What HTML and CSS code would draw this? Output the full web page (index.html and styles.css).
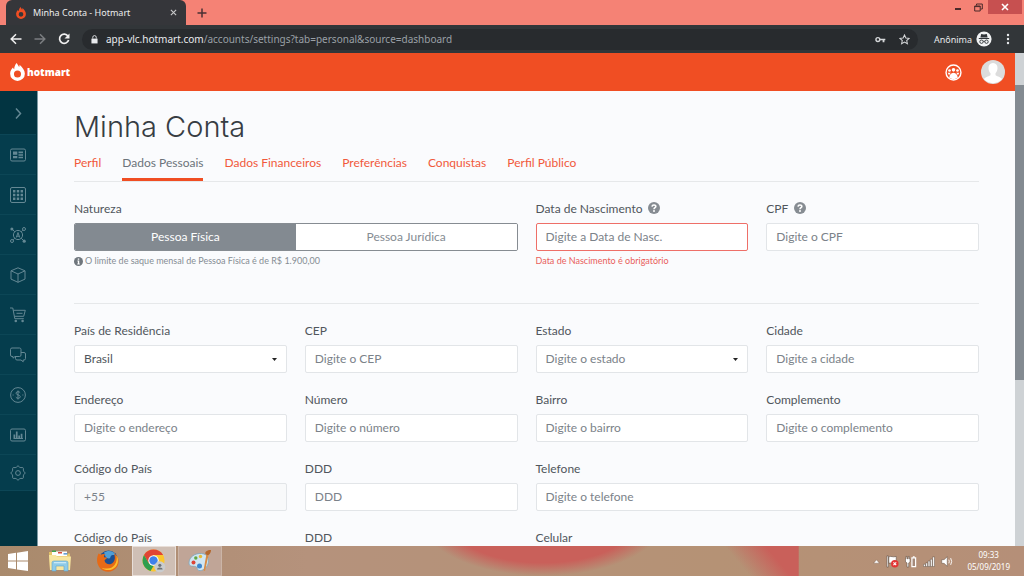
FILE: index.html
```html
<!DOCTYPE html>
<html lang="pt-BR">
<head>
<meta charset="utf-8">
<meta name="viewport" content="width=device-width, initial-scale=1">
<title>Minha Conta - Hotmart</title>
<link rel="stylesheet" href="styles.css">
</head>
<body>
<div class="screen">

  <div class="tabstrip">
    <div class="browser-tab">
      <svg class="favicon" viewBox="0 0 18 22" width="10" height="12"><path fill="#f04e23" fill-rule="evenodd" d="M8 0c1 2 2 3 3 5 .5-1 .6-2 .5-3C15 5 18 9 18 13a9 9 0 0 1-18 0C0 10 1.500 7.500 3.500 5.500c.2 1 .6 1.700 1.500 2C5 5 6 2 8 0zM9 9.200a4.300 4.300 0 1 0 0 8.600 4.300 4.300 0 0 0 0-8.600z"/></svg>
      <span class="browser-tab-title">Minha Conta - Hotmart</span>
      <button class="icon-button" aria-label="Fechar guia"><svg viewBox="0 0 8 8" width="7" height="7"><path stroke="#c8c9ca" stroke-width="1.300" d="M1 1l6 6M7 1l-6 6"/></svg></button>
    </div>
    <button class="icon-button new-tab" aria-label="Nova guia"><svg viewBox="0 0 10 10" width="10" height="10"><path stroke="#4a3033" stroke-width="1.500" d="M5 .5v9M.5 5h9"/></svg></button>
    <div class="window-controls">
      <button class="icon-button" aria-label="Minimizar"><svg viewBox="0 0 8 8" width="8" height="8"><path fill="#4a2a2a" d="M1 5h6v2H1z"/></svg></button>
      <button class="icon-button" aria-label="Restaurar"><svg viewBox="0 0 9 9" width="9" height="9"><path fill="none" stroke="#4a2a2a" d="M.7 3h5.500v5H.7zM.7 3.600h5.500M2.500 2.500V1h5.800v5H6.500"/></svg></button>
      <button class="icon-button window-close" aria-label="Fechar"><svg viewBox="0 0 8 8" width="8" height="8"><path stroke="#fff" stroke-width="1.600" d="M1 1l6 6M7 1l-6 6"/></svg></button>
    </div>
  </div>

  <div class="toolbar">
    <button class="icon-button" aria-label="Voltar"><svg viewBox="0 0 12 12" width="12" height="12"><path fill="none" stroke="#f1f1f1" stroke-width="1.500" d="M11.500 6H1.500M6 1.200L1.200 6 6 10.800"/></svg></button>
    <button class="icon-button" aria-label="Avançar"><svg viewBox="0 0 12 12" width="12" height="12"><path fill="none" stroke="#7b7e81" stroke-width="1.500" d="M.5 6h10M6 1.200L10.800 6 6 10.800"/></svg></button>
    <button class="icon-button" aria-label="Recarregar"><svg viewBox="0 0 12 12" width="12" height="12"><path fill="none" stroke="#f1f1f1" stroke-width="1.700" d="M10 3.200A4.600 4.600 0 1 0 10.600 7"/><path fill="#f1f1f1" d="M11.500.5v5h-5z"/></svg></button>
    <div class="address">
      <svg viewBox="0 0 8 10" width="7" height="9"><path fill="#e8eaed" d="M.5 4h7v5.500h-7z"/><path fill="none" stroke="#e8eaed" d="M2 4V2.500a2 2 0 0 1 4 0V4"/></svg>
      <span class="url"><span class="url-host">app-vlc.hotmart.com</span>/accounts/settings?tab=personal&amp;source=dashboard</span>
      <button class="icon-button" aria-label="Senhas"><svg viewBox="0 0 12 8" width="11" height="7"><circle cx="3" cy="4" r="2.200" fill="none" stroke="#d5d7d9" stroke-width="1.600"/><path fill="#d5d7d9" d="M5 3.100h6.500v1.800h-1V7H8.400V4.900H5z"/></svg></button>
      <button class="icon-button star" aria-label="Favoritos"><svg viewBox="0 0 12 12" width="11" height="11"><path fill="none" stroke="#d5d7d9" stroke-width="1.100" d="M6 1l1.500 3.300 3.600.4-2.700 2.400.8 3.600L6 8.900l-3.200 1.800.8-3.600L.9 4.700l3.600-.4z"/></svg></button>
    </div>
    <span class="incognito">Anônima</span>
    <svg viewBox="0 0 16 16" width="16" height="16"><circle cx="8" cy="8" r="7.600" fill="#f1f3f4"/><path fill="#303438" d="M5.200 3l2.800.6 2.800-.6.8 3.600H4.400zM2.800 7h10.400v1H2.800z"/><g fill="none" stroke="#303438" stroke-width=".9"><circle cx="5.500" cy="10.700" r="1.700"/><circle cx="10.500" cy="10.700" r="1.700"/><path d="M7.200 10.300h1.600"/></g></svg>
    <button class="icon-button menu" aria-label="Menu"><svg viewBox="0 0 4 12" width="4" height="12" fill="#e8eaed"><circle cx="2" cy="2" r="1.200"/><circle cx="2" cy="6" r="1.200"/><circle cx="2" cy="10" r="1.200"/></svg></button>
  </div>

  <div class="viewport">
    <div class="page">
      <header class="site-header">
        <a class="brand" href="#">
          <svg viewBox="0 0 18 22" width="15" height="18"><path fill="#fff" fill-rule="evenodd" d="M8 0c1 2 2 3 3 5 .5-1 .6-2 .5-3C15 5 18 9 18 13a9 9 0 0 1-18 0C0 10 1.500 7.500 3.500 5.500c.2 1 .6 1.700 1.500 2C5 5 6 2 8 0zM9 9.200a4.300 4.300 0 1 0 0 8.600 4.300 4.300 0 0 0 0-8.600z"/></svg>
          <span>hotmart</span>
        </a>
        <button class="icon-button" aria-label="Comunidade"><svg viewBox="0 0 18 18" width="17" height="17"><circle cx="9" cy="9" r="7.900" fill="none" stroke="#fff" stroke-width="1.500"/><g fill="#fff"><circle cx="9" cy="6.200" r="1.900"/><circle cx="4.800" cy="6.900" r="1.400"/><circle cx="13.200" cy="6.900" r="1.400"/><path d="M2.800 9.300h3.300L4.300 12zM15.200 9.300h-3.300l1.800 2.700zM9 9.200c2.700 0 4.300 2.300 4.500 5.300a8 8 0 0 1-9 0c.2-3 1.800-5.300 4.500-5.300z"/></g></svg></button>
        <button class="icon-button" aria-label="Minha conta"><svg viewBox="0 0 24 24" width="24" height="24"><circle cx="12" cy="12" r="12" fill="#dcdcdc"/><path fill="#fff" d="M12 3c3 0 4.500 2.200 4.500 5 0 2.300-.8 4-2 5.200v1.800c.6 1.300 4.600 1.700 6.600 4A12 12 0 0 1 2.900 19c2-2.300 6-2.700 6.600-4v-1.800c-1.200-1.200-2-2.900-2-5.200 0-2.800 1.500-5 4.500-5z"/></svg></button>
      </header>

      <div class="page-body">
        <nav class="sidebar" aria-label="Menu principal">
          <a href="#" class="side-toggle" aria-label="Expandir"><svg viewBox="0 0 16 16" width="16" height="16"><path d="M6 3.500L10.500 8.500 6 13.500"/></svg></a>
          <a href="#" aria-label="Painel"><svg viewBox="0 0 16 16" width="16" height="16"><rect x=".5" y="2" width="15" height="12" rx="1.500"/><path class="solid" d="M3 4.500h4.300v3.300H3zM3 9h4.300v2.300H3zM8.500 4.500H13v1.800H8.500zM8.500 7.200H13v1.600H8.500zM8.500 9.700H13v1.600H8.500z"/></svg></a>
          <a href="#" aria-label="Aplicativos"><svg viewBox="0 0 16 16" width="16" height="16"><rect x=".5" y=".5" width="15" height="15" rx="1.500"/><path class="solid" d="M3 3h2.400v2.400H3zM6.800 3h2.400v2.400H6.800zM10.600 3H13v2.400h-2.400zM3 6.800h2.400v2.400H3zM6.800 6.800h2.400v2.400H6.800zM10.600 6.800H13v2.400h-2.400zM3 10.600h2.400V13H3zM6.800 10.600h2.400V13H6.800zM10.600 10.600H13V13h-2.400z"/></svg></a>
          <a href="#" aria-label="Afiliados"><svg viewBox="0 0 16 16" width="16" height="16"><circle cx="8" cy="8" r="4.600"/><path d="M6.300 10.500L8 5.500l1.700 5M6.800 9.200h2.400M2 2l2.800 2.800M12.800 3.200l-1.600 1.600M3.200 12.800l1.600-1.600M14 14l-2.800-2.800"/><circle cx="14" cy="2" r="1.500"/><circle cx="2" cy="14" r="1.500"/><circle class="solid" cx="1.900" cy="1.900" r="1.500"/><circle class="solid" cx="14.200" cy="14.200" r="1.600"/></svg></a>
          <a href="#" aria-label="Produtos"><svg viewBox="0 0 16 16" width="16" height="16"><path d="M8 .8l7 3v8.300l-7 3.200-7-3.200V3.800zM1 3.800l7 3.200 7-3.200M8 7v8.300"/></svg></a>
          <a href="#" aria-label="Vendas"><svg viewBox="0 0 16 16" width="16" height="16"><path d="M0 1h2.800l2 10.700h9M3.300 3.300h12l-1.600 6H4.500M6.500 6.300h6"/><circle class="solid" cx="5.800" cy="14" r="1.300"/><circle class="solid" cx="12.600" cy="14" r="1.300"/></svg></a>
          <a href="#" aria-label="Mensagens"><svg viewBox="0 0 16 16" width="16" height="16"><path d="M5 9.500l-2 1.700V9.500H2A1.500 1.500 0 0 1 .5 8V2.500A1.500 1.500 0 0 1 2 1h7.500A1.500 1.500 0 0 1 11 2.500V8a1.500 1.500 0 0 1-1.500 1.500zM11 5.500h3A1.500 1.500 0 0 1 15.500 7v4.500A1.500 1.500 0 0 1 14 13h-.8v1.800L11 13H7a1.500 1.500 0 0 1-1.500-1.500v-2"/></svg></a>
          <a href="#" aria-label="Financeiro"><svg viewBox="0 0 16 16" width="16" height="16"><circle cx="8" cy="8" r="7.400"/><path d="M10.200 5.800C9.500 4.200 6 4.300 6 6.200c0 2 4.300 1.400 4.300 3.500 0 2-3.700 2.100-4.500.4M8 3.500v9M2.600 8h1M12.400 8h1"/></svg></a>
          <a href="#" aria-label="Relatórios"><svg viewBox="0 0 16 16" width="16" height="16"><rect x=".5" y="2" width="15" height="12" rx="1.500"/><path class="solid" d="M3.500 7.500h1.700V12H3.500zM5.900 4.500h1.700V12H5.900zM8.300 8.500H10V12H8.300zM10.700 6.700h1.700V12h-1.700zM3.500 11h9.500v1H3.500z"/></svg></a>
          <a href="#" aria-label="Configurações"><svg viewBox="0 0 16 16" width="16" height="16"><circle cx="8" cy="8" r="2.400"/><path d="M6.400 2.200Q8-.8 9.600 2.200l1.300.5q3.200-1 2.400 2.400l.5 1.300q3 1.600 0 3.200l-.5 1.300q.8 3.400-2.400 2.400l-1.300.5q-1.600 3-3.200 0l-1.300-.5q-3.200 1-2.400-2.400l-.5-1.300q-3-1.600 0-3.200l.5-1.300q-.8-3.400 2.400-2.400z"/></svg></a>
        </nav>

        <main class="content">
          <h1>Minha Conta</h1>
          <nav class="tabs" aria-label="Seções da conta">
            <a href="#">Perfil</a>
            <a href="#" class="active" aria-current="page">Dados Pessoais</a>
            <a href="#">Dados Financeiros</a>
            <a href="#">Preferências</a>
            <a href="#">Conquistas</a>
            <a href="#">Perfil Público</a>
          </nav>

          <form>
            <div class="fields fields-top">
              <div class="field span-2" role="group" aria-labelledby="natureza">
                <span class="label" id="natureza">Natureza</span>
                <div class="segmented">
                  <button type="button" class="selected" aria-pressed="true">Pessoa Física</button>
                  <button type="button" aria-pressed="false">Pessoa Jurídica</button>
                </div>
                <small class="hint"><svg viewBox="0 0 10 10" width="9" height="9"><circle cx="5" cy="5" r="5" fill="#6f767d"/><path fill="#fff" d="M4.200 1.600h1.600v1.500H4.200zM3.800 4h2v3.200h.6v1H3.700v-1h.6V5h-.5z"/></svg>O limite de saque mensal de Pessoa Física é de R$ 1.900,00</small>
              </div>
              <div class="field">
                <label for="nasc">Data de Nascimento <svg viewBox="0 0 12 12" width="12" height="12"><circle cx="6" cy="6" r="6" fill="#868c92"/><path fill="none" stroke="#fff" stroke-width="1.600" d="M4 4.600C4.200 2.300 8 2.500 7.800 4.600 7.700 5.700 6 5.700 6 7.300"/><circle cx="6" cy="9.100" r="1" fill="#fff"/></svg></label>
                <input class="invalid" id="nasc" type="text" placeholder="Digite a Data de Nasc." aria-describedby="nasc-erro">
                <small class="error" id="nasc-erro">Data de Nascimento é obrigatório</small>
              </div>
              <div class="field">
                <label for="cpf">CPF <svg viewBox="0 0 12 12" width="12" height="12"><circle cx="6" cy="6" r="6" fill="#868c92"/><path fill="none" stroke="#fff" stroke-width="1.600" d="M4 4.600C4.200 2.300 8 2.500 7.800 4.600 7.700 5.700 6 5.700 6 7.300"/><circle cx="6" cy="9.100" r="1" fill="#fff"/></svg></label>
                <input id="cpf" type="text" placeholder="Digite o CPF">
              </div>
            </div>

            <div class="fields">
              <div class="field"><label for="pais">País de Residência</label><select id="pais"><option>Brasil</option></select></div>
              <div class="field"><label for="cep">CEP</label><input id="cep" type="text" placeholder="Digite o CEP"></div>
              <div class="field"><label for="estado">Estado</label><select id="estado" class="empty"><option>Digite o estado</option></select></div>
              <div class="field"><label for="cidade">Cidade</label><input id="cidade" type="text" placeholder="Digite a cidade"></div>

              <div class="field"><label for="endereco">Endereço</label><input id="endereco" type="text" placeholder="Digite o endereço"></div>
              <div class="field"><label for="numero">Número</label><input id="numero" type="text" placeholder="Digite o número"></div>
              <div class="field"><label for="bairro">Bairro</label><input id="bairro" type="text" placeholder="Digite o bairro"></div>
              <div class="field"><label for="complemento">Complemento</label><input id="complemento" type="text" placeholder="Digite o complemento"></div>

              <div class="field"><label for="ddi">Código do País</label><input id="ddi" type="text" placeholder="+55" disabled></div>
              <div class="field"><label for="ddd">DDD</label><input id="ddd" type="text" placeholder="DDD"></div>
              <div class="field span-2"><label for="telefone">Telefone</label><input id="telefone" type="tel" placeholder="Digite o telefone"></div>

              <div class="field"><label for="ddi2">Código do País</label><input id="ddi2" type="text" placeholder="+55" disabled></div>
              <div class="field"><label for="ddd2">DDD</label><input id="ddd2" type="text" placeholder="DDD"></div>
              <div class="field span-2"><label for="celular">Celular</label><input id="celular" type="tel" placeholder="Digite o celular"></div>
            </div>
          </form>
        </main>
      </div>
    </div>
    <div class="scrollbar"><div class="scroll-thumb"></div></div>
  </div>

  <div class="taskbar">
    <button class="task" aria-label="Iniciar"><svg viewBox="0 0 20 20" width="20" height="20" fill="#fff"><path d="M0 3l8-1.200v7.700H0zM9 1.700L20 0v9.500H9zM0 10.500h8v7.700L0 17zM9 10.500h11V20L9 18.400z"/></svg></button>
    <button class="task" aria-label="Explorador"><svg viewBox="0 0 24 24" width="24" height="24"><path fill="#e5c567" d="M1 3h7l1 1.500h13V20H2z"/><path fill="#fff" d="M4 2.500h15V7H4z"/><path fill="#3fa34d" d="M4 1.500h4V3H4z"/><path fill="#d94a3a" d="M10 3h4v1.500h-4z"/><path fill="#3f87c9" d="M15.500 4.200h4v1.300h-4z"/><path fill="#f8e6a0" d="M1 6h7l1 1.500h14L22 21H2z"/><path fill="#8fcbe8" stroke="#5ca5cc" stroke-width=".6" d="M4 13.500Q4 12 6 12h12q2 0 2 1.500V22h-4v-5H8v5H4z"/><path fill="#c9e9f7" d="M6 13h12v1.300H6z"/></svg></button>
    <button class="task" aria-label="Firefox"><svg viewBox="0 0 24 24" width="24" height="24"><circle cx="12.500" cy="11" r="9.500" fill="#1d4f91"/><path fill="#4f9ed6" d="M8 3.500c4-3 10-1.500 11.500 2-2 1-4-.5-5 2.500s-4 1-5-.5z"/><path fill="#e66a16" d="M2.500 4.500c.8.200 1.500.7 2 1.500C6 4.700 8 4.700 9.500 5.500 8.200 6.200 7.800 7.200 8 8.200l3 .3c0 1.500-2 1.700-2.500 3 1 4.500 6.500 5 9 1.500 2-3 1.500-6 .3-9C23 8 24 13 21 18c-4 6-13 6.500-17.500.5C-.2 13.500 1 8 2.500 4.500z"/><path fill="#fbbd2e" d="M20.500 6c3 5 1.500 12-4.500 14.500-4 1.300-8 .5-10.500-1.800 6 1.800 10.500.8 13-2.700 2.300-3 2.500-6.500 2-10z"/></svg></button>
    <button class="task running front" aria-label="Chrome"><svg viewBox="0 0 24 24" width="24" height="24"><circle cx="11.500" cy="11.500" r="11" fill="#fbc62f"/><path fill="#e04434" d="M2 6A11 11 0 0 1 21.100 6H11.500L6.700 14.300z"/><path fill="#2f9e4f" d="M2 6l4.800 8.200 4.700 2.800-3 5A11 11 0 0 1 2 6z"/><circle cx="11.500" cy="11.500" r="5.200" fill="#fff"/><circle cx="11.500" cy="11.500" r="4.200" fill="#3f80ea"/><circle cx="17.800" cy="17.800" r="5.500" fill="#c9cccf"/><path fill="#6d7277" d="M15 20.500q0-2 2.800-2t2.800 2z"/><circle cx="17.800" cy="16.300" r="1.600" fill="#6d7277"/></svg></button>
    <button class="task running" aria-label="Paint"><svg viewBox="0 0 24 24" width="24" height="24"><path fill="#cfe6f2" stroke="#7fa5bb" stroke-width=".8" d="M1 14C1 8 7 4 13.500 4.500 20 5 21.500 10 20 15c-1.500 4.500-5.500 7-9 6.500-2.500-.5-1-3.500-3.500-4S1 18 1 14z"/><circle cx="5.500" cy="13.500" r="2" fill="#dd4436"/><circle cx="7.800" cy="9" r="1.700" fill="#62a746"/><circle cx="12.500" cy="7.500" r="1.700" fill="#e8bb35"/><circle cx="11.500" cy="17" r="2.500" fill="#3c86cf"/><path fill="#d88b42" d="M18.500 5l2 1L17 22l-1.500-.7z"/><path fill="#b4672d" d="M17.500 5c-1-2 1.500-4 5.500-4 0 3-2 5.500-3.800 5z"/></svg></button>
    <div class="tray">
      <svg viewBox="0 0 8 6" width="7" height="5"><path fill="#fff" stroke="#745b4b" stroke-width=".5" d="M4 1l3.500 4h-7z"/></svg>
      <svg viewBox="0 0 14 14" width="13" height="13"><path fill="#fff" stroke="#5b4a40" stroke-width=".6" d="M1 1h1.500v12H1zM3 2c3-1.500 4 1 8-.5v7c-4 1.500-5-1-8 .5z"/><circle cx="9.500" cy="9.500" r="4" fill="#e33434"/><path stroke="#fff" stroke-width="1.200" d="M8 8l3 3M11 8l-3 3"/></svg>
      <svg viewBox="0 0 13 13" width="12" height="13"><path fill="#fff" stroke="#5b4a40" stroke-width=".6" d="M1 1h1.200v2.500h1.300V1h1.200v2.500h.8V7L4 8v4.500H2.200V8L.5 7V3.500H1z"/><path fill="#a58a7a" stroke="#fff" stroke-width="1.300" d="M7.500 2.500h4v9.500h-4z"/><path fill="#fff" d="M8.500.8h2v1.500h-2z"/></svg>
      <svg viewBox="0 0 13 12" width="12" height="11"><path fill="#fff" stroke="#5b4a40" stroke-width=".5" d="M.5 9h2v2.500h-2zM3 7.500h2v4H3zM5.500 5.500h2v6h-2zM8 3.500h2v8H8zM10.500 1h2v10.500h-2z"/></svg>
      <svg viewBox="0 0 13 12" width="12" height="11"><path fill="#fff" stroke="#5b4a40" stroke-width=".5" d="M.8 4h2.500L6.800.8v10.400L3.300 8H.8z"/><path fill="none" stroke="#fff" d="M8.500 4q1 2 0 4M10.500 2.300q2.200 3.700 0 7.400"/></svg>
      <div class="clock"><span>09:33</span><span>05/09/2019</span></div>
    </div>
  </div>
</div>
</body>
</html>
```
FILE: styles.css
```css
* { box-sizing: border-box; }

body {
  margin: 0;
  font-family: Lato, "Open Sans", sans-serif;
  font-size: 12px;
  color: #50565c;
}

a { text-decoration: none; }

svg { display: block; flex: none; }

button, input, select { font: inherit; color: inherit; }

.screen {
  display: flex;
  flex-direction: column;
  height: 100vh;
  overflow: hidden;
}

.icon-button {
  display: flex;
  align-items: center;
  justify-content: center;
  padding: 0;
  border: 0;
  background: none;
}

/* Browser window */
.tabstrip {
  display: flex;
  flex: none;
  height: 25px;
  background: #f58275;
}

.browser-tab {
  display: flex;
  align-items: center;
  gap: 7px;
  width: 180px;
  margin-left: 6px;
  padding: 0 9px 0 10px;
  border-radius: 6px 6px 0 0;
  background: #35363a;
  color: #eceded;
  font-family: "Noto Sans", sans-serif;
  font-size: 9px;
}

.browser-tab-title { flex: 1; }

.new-tab { margin-left: 11px; }

.window-controls {
  display: flex;
  align-items: flex-start;
  margin-left: auto;
  padding-right: 2px;
}

.window-controls .icon-button { width: 20px; height: 14px; }
.window-controls .window-close { width: 34px; background: #c75050; }

.toolbar {
  display: flex;
  flex: none;
  align-items: center;
  gap: 12px;
  height: 28px;
  padding: 0 12px 0 10px;
  background: #323639;
  color: #e8eaed;
  font-family: "Noto Sans", sans-serif;
}

.address {
  display: flex;
  flex: 1;
  align-items: center;
  gap: 8px;
  height: 21px;
  margin-right: 4px;
  padding: 0 8px 0 9px;
  border-radius: 11px;
  background: #282b2e;
}

.url { flex: 1; color: #9aa0a6; font-size: 10px; }
.url-host { color: #e8eaed; }
.star { margin-left: 5px; }
.incognito { margin-right: -8px; font-size: 9px; }
.menu { width: 8px; }

/* Page area with its scrollbar */
.viewport {
  display: flex;
  flex: 1;
  min-height: 0;
}

.page {
  display: flex;
  flex: 1;
  flex-direction: column;
  min-width: 0;
}

.scrollbar { width: 9px; background: #ced2d5; padding-top: 32px; }
.scroll-thumb { height: 64%; background: #838a91; }

.site-header {
  display: flex;
  flex: none;
  align-items: center;
  gap: 19px;
  height: 38px;
  padding: 0 10px;
  background: #f04e23;
}

.brand {
  display: flex;
  align-items: center;
  gap: 2px;
  margin-right: auto;
  color: #fff;
  font-family: "Open Sans", sans-serif;
  font-size: 10px;
  font-weight: 800;
}

.page-body {
  display: flex;
  flex: 1;
  min-height: 0;
}

.sidebar {
  flex: none;
  width: 38px;
  padding-right: 1px;
  border-right: 1px solid #7c99a3;
  background: #023441;
}

.sidebar a {
  display: flex;
  align-items: center;
  justify-content: center;
  height: 40px;
  border-bottom: 1px solid #0c4656;
  background: #053d4d;
}

.sidebar a:last-child { height: 36px; }
.sidebar .side-toggle { height: 44px; background: #023441; }

.sidebar svg { fill: none; stroke: #648894; stroke-width: 1; }
.sidebar .solid { fill: #648894; stroke: none; }
.sidebar .side-toggle svg { stroke-width: 1.5; }

.content {
  flex: 1;
  min-width: 0;
  padding: 16px 36px 0;
  overflow: hidden;
  background: #fafbfd;
}

h1 {
  margin: 0;
  color: #373d43;
  font-family: Inter, "Open Sans", sans-serif;
  font-size: 29px;
  font-weight: 300;
  line-height: 40px;
}

.tabs {
  display: flex;
  gap: 21px;
  margin-top: 7px;
  border-bottom: 1px solid #e6e8ea;
}

.tabs a {
  padding-bottom: 6px;
  border-bottom: 3px solid transparent;
  color: #f1593b;
  line-height: 18px;
}

.tabs .active { border-color: #f04e23; color: #6c737a; }

/* Form */
.fields {
  display: grid;
  grid-template-columns: repeat(4, minmax(0, 1fr));
  gap: 18px;
  padding-top: 18px;
}

.fields-top {
  padding-bottom: 35px;
  border-bottom: 1px solid #e6e8ea;
}

.field { display: flex; flex-direction: column; }
.span-2 { grid-column: span 2; }

.field label, .label {
  display: flex;
  align-items: center;
  gap: 6px;
  height: 16px;
  margin-bottom: 7px;
}

.field input, .field select {
  width: 100%;
  height: 28px;
  padding: 0 9px 2px;
  border: 1px solid #e2e5e8;
  border-radius: 2px;
  background: #fff;
  color: #50565c;
}

.field input::placeholder { color: #7b8289; opacity: 1; }
.field input:disabled { background: #f8f9fa; }
.field .invalid { border-color: #ee6f68; }

.field select {
  appearance: none;
  background: #fff url("data:image/svg+xml,%3Csvg xmlns='http://www.w3.org/2000/svg' width='5' height='3'%3E%3Cpath d='M0 0h5L2.500 3z' fill='%23222'/%3E%3C/svg%3E") no-repeat right 9px center;
}

.field .empty { color: #7b8289; }

.segmented {
  display: flex;
  height: 28px;
  border: 1px solid #868c92;
  border-radius: 2px;
  overflow: hidden;
}

.segmented button {
  flex: 1;
  padding: 0 0 2px;
  border: 0;
  background: #fff;
  color: #858c93;
}

.segmented .selected { background: #838a91; color: #fff; }

.hint, .error {
  display: flex;
  align-items: center;
  gap: 2px;
  margin-top: 3px;
  font-size: 9px;
  line-height: 14px;
}

.hint { color: #868d94; }
.error { color: #e95f5c; }

/* Desktop taskbar */
.taskbar {
  display: flex;
  flex: none;
  align-items: center;
  height: 30px;
  background:
    radial-gradient(ellipse 124px 60px at 53% -30px, #c9605a 0 78%, transparent 100%),
    linear-gradient(50deg, transparent 91%, #c9605a 96%) 0 0 / 78% 100% no-repeat,
    linear-gradient(90deg, #a98a6c 0, #b5927c 30%, #b59275 70%, #b58f78 100%);
}

.task {
  display: flex;
  align-items: center;
  justify-content: center;
  width: 44px;
  height: 30px;
  padding: 0;
  border: 1px solid transparent;
  background: none;
}

.task:first-child { width: 36px; }
.task:nth-child(2), .task:nth-child(3) { width: 48px; }

.running { margin-right: 2px; border-color: #cbb5a7; background: #c0a597; }
.front { border-color: #e8ded8; background: #cfbfb5; }

.tray {
  display: flex;
  align-items: center;
  gap: 6px;
  margin-left: auto;
  padding-right: 14px;
}

.clock {
  display: flex;
  flex-direction: column;
  align-items: center;
  margin-left: 8px;
  color: #fff;
  font-family: "Noto Sans", sans-serif;
  font-size: 8px;
  line-height: 12px;
}
```
